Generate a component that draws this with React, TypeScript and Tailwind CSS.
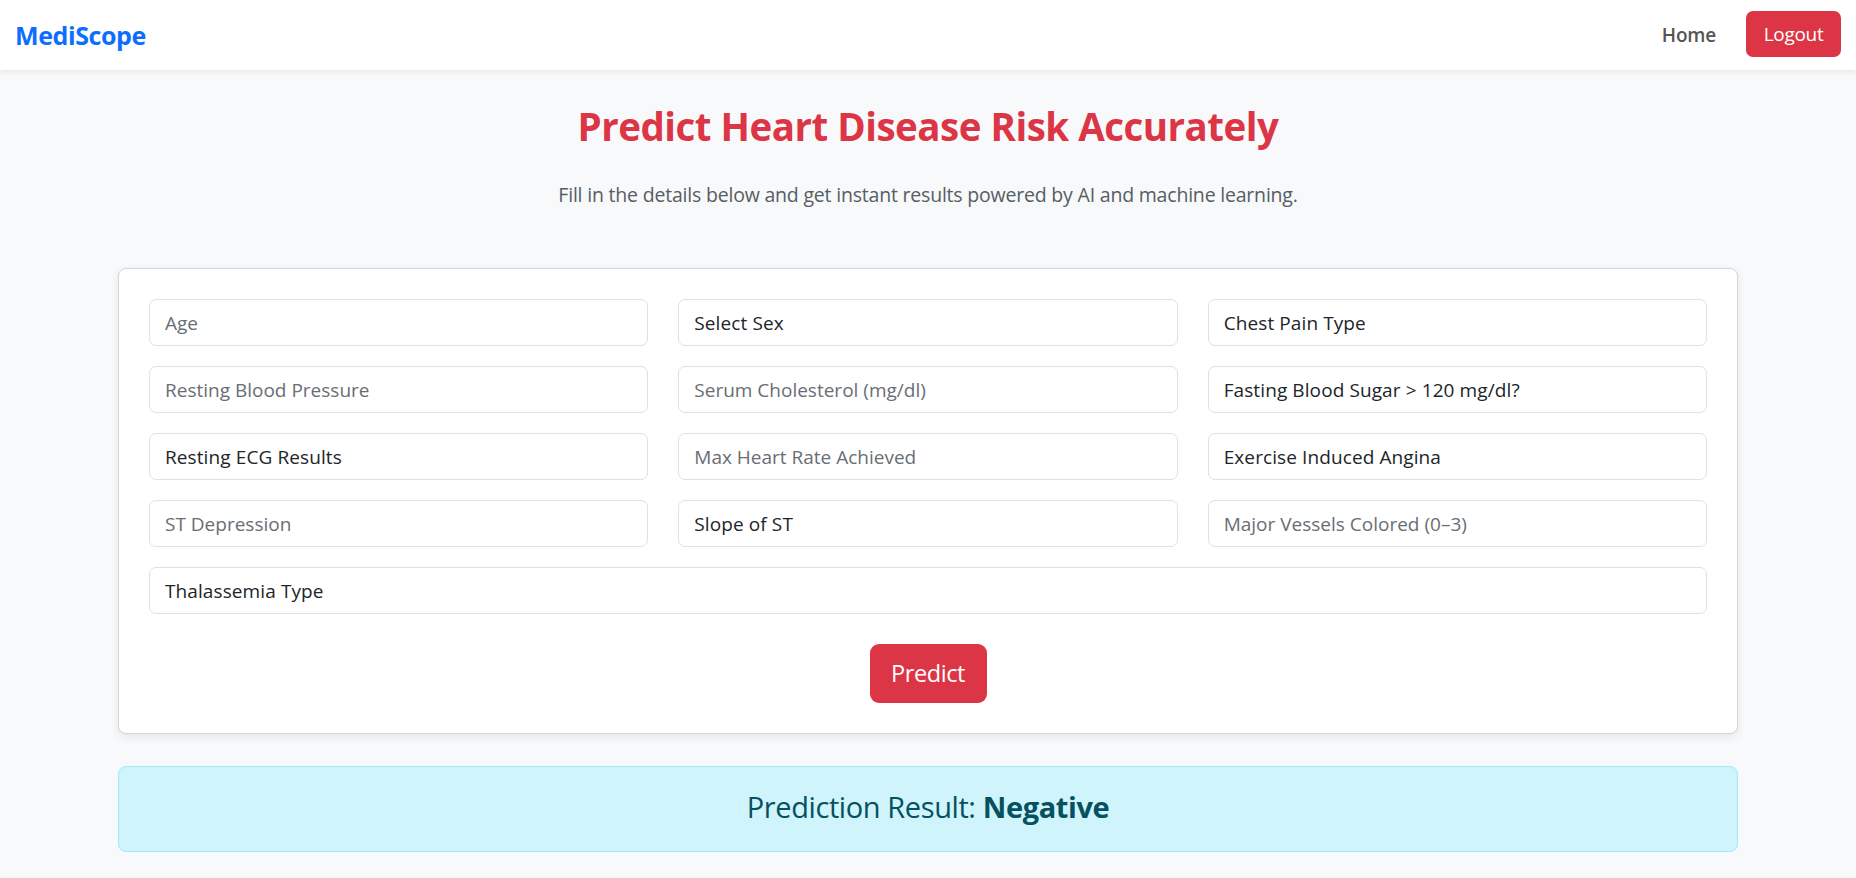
import React from "react";

const F = { fontFamily: '"Open Sans", "Noto Sans", Arial, sans-serif' };

type Field = { label: string; kind: "input" | "select"; full?: boolean };

const fields: Field[] = [
  { label: "Age", kind: "input" },
  { label: "Select Sex", kind: "select" },
  { label: "Chest Pain Type", kind: "select" },
  { label: "Resting Blood Pressure", kind: "input" },
  { label: "Serum Cholesterol (mg/dl)", kind: "input" },
  { label: "Fasting Blood Sugar > 120 mg/dl?", kind: "select" },
  { label: "Resting ECG Results", kind: "select" },
  { label: "Max Heart Rate Achieved", kind: "input" },
  { label: "Exercise Induced Angina", kind: "select" },
  { label: "ST Depression", kind: "input" },
  { label: "Slope of ST", kind: "select" },
  { label: "Major Vessels Colored (0–3)", kind: "input" },
  { label: "Thalassemia Type", kind: "select", full: true },
];

function Control({ f }: { f: Field }) {
  const base =
    "block w-full h-[47px] rounded-[7px] border border-[#dee2e6] bg-white px-[15px] text-[19px] leading-[30px] outline-none";
  if (f.kind === "input") {
    return (
      <input
        className={base + " text-[#212529] placeholder:text-[#686e74]"}
        placeholder={f.label}
        style={F}
      />
    );
  }
  return (
    <select className={base + " appearance-none text-[#212529] tracking-[0.1px]"} style={F} defaultValue="">
      <option value="">{f.label}</option>
    </select>
  );
}

export default function App() {
  return (
    <div className="min-h-screen bg-[#f8f9fa]" style={F}>
      <nav className="h-[70px] bg-white shadow-[0_2px_6px_rgba(0,0,0,0.08)] flex items-center justify-between pl-[15px] pr-[15px]">
        <span className="text-[25px] font-bold text-[#0d6efd] tracking-[-0.4px] mt-[2px]">MediScope</span>
        <div className="flex items-center gap-[30px] -mt-[3px]">
          <span className="text-[19px] font-semibold text-[#555] tracking-[-0.2px] mt-[4px]">Home</span>
          <button className="h-[46px] w-[95px] rounded-[7px] bg-[#dc3545] text-white text-[19px] tracking-[-0.3px] pt-[1px]">
            Logout
          </button>
        </div>
      </nav>

      <main className="mx-auto w-[1620px] pt-[32px]">
        <h2 className="text-center text-[38.5px] leading-[48px] font-bold text-[#dc3545] tracking-[-0.5px]">
          Predict Heart Disease Risk Accurately
        </h2>
        <p className="mt-[30px] text-center text-[19.5px] leading-[30px] text-[#575d63] tracking-[-0.2px]">
          Fill in the details below and get instant results powered by AI and machine learning.
        </p>

        <div className="mt-[58px] rounded-[8px] border border-[#d6d6d6] bg-white p-[30px] shadow-[0_3px_8px_rgba(0,0,0,0.08)]">
          <div className="grid grid-cols-3 gap-x-[30px] gap-y-[20px]">
            {fields.map((f) => (
              <div key={f.label} className={f.full ? "col-span-3" : ""}>
                <Control f={f} />
              </div>
            ))}
          </div>
          <div className="mt-[30px] flex justify-center">
            <button className="h-[59px] w-[117px] rounded-[9px] bg-[#dc3545] text-white text-[23.5px] tracking-[-0.4px] pt-[1px]">
              Predict
            </button>
          </div>
        </div>

        <div className="mt-[32px] h-[86px] rounded-[8px] border border-[#9eeaf9] bg-[#cff4fc] flex items-center justify-center text-[#055160] text-[29px] tracking-[-0.4px] pb-[5px]">
          <span>
            Prediction Result: <b className="font-bold">Negative</b>
          </span>
        </div>
      </main>
    </div>
  );
}
